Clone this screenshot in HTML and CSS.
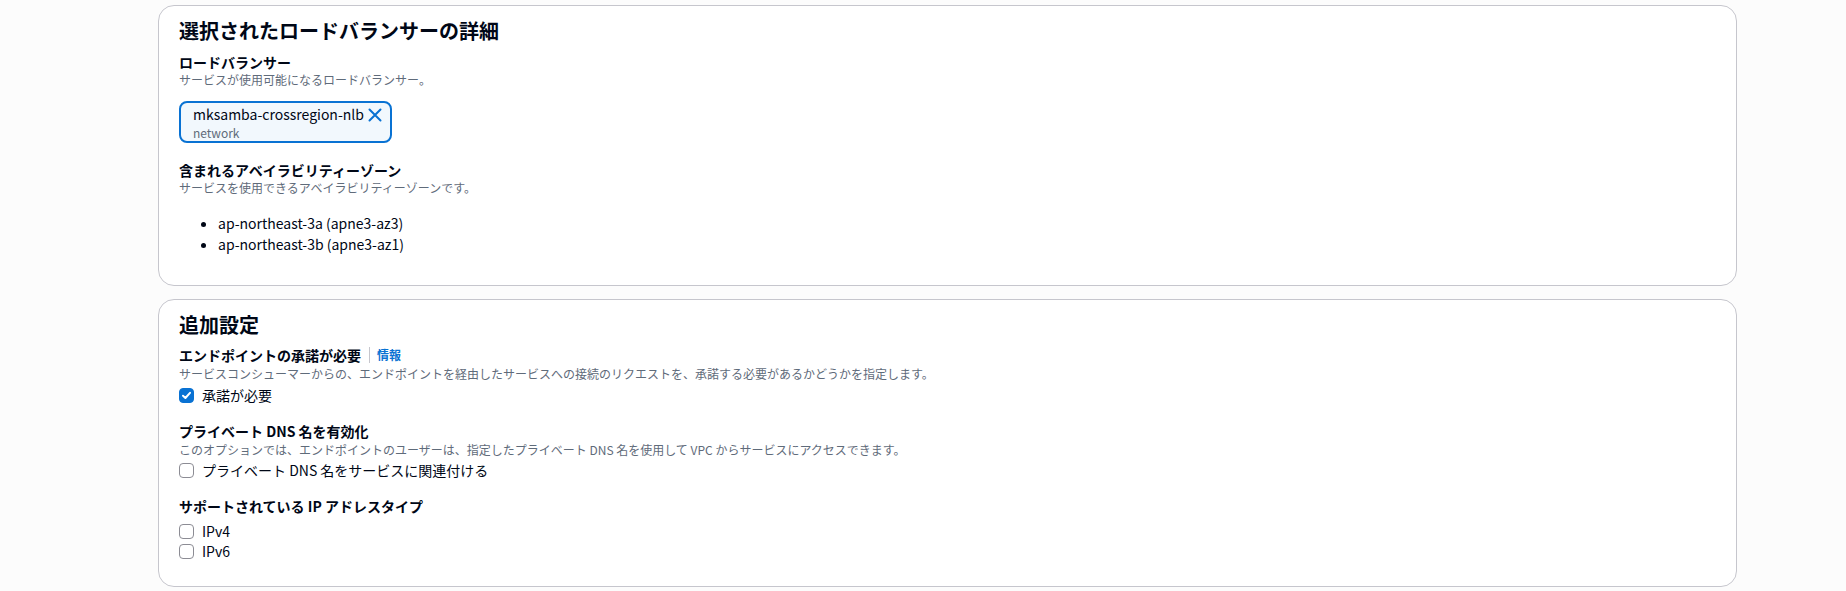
FILE: index.html
```html
<!DOCTYPE html>
<html lang="ja">
<head>
<meta charset="utf-8">
<link rel="stylesheet" href="styles.css">
</head>
<body>
<main class="page">
  <section class="card card-lb">
    <h2 class="card-title">選択されたロードバランサーの詳細</h2>
    <div class="field">
      <div class="label">ロードバランサー</div>
      <div class="desc">サービスが使用可能になるロードバランサー。</div>
    </div>
    <div class="token">
      <div class="token-text">
        <div class="token-name">mksamba-crossregion-nlb</div>
        <div class="token-sub">network</div>
      </div>
      <svg class="token-x" width="14" height="14" viewBox="0 0 14 14" aria-hidden="true">
        <path d="M1.5 1.5 L12.5 12.5 M12.5 1.5 L1.5 12.5" stroke="#0972d3" stroke-width="2" fill="none" stroke-linecap="round"/>
      </svg>
    </div>
    <div class="field field-az">
      <div class="label">含まれるアベイラビリティーゾーン</div>
      <div class="desc">サービスを使用できるアベイラビリティーゾーンです。</div>
    </div>
    <ul class="az-list">
      <li>ap-northeast-3a (apne3-az3)</li>
      <li>ap-northeast-3b (apne3-az1)</li>
    </ul>
  </section>

  <section class="card card-extra">
    <h2 class="card-title">追加設定</h2>
    <div class="field field-first">
      <div class="label label-tall">エンドポイントの承諾が必要<span class="sep"></span><a class="info">情報</a></div>
      <div class="desc">サービスコンシューマーからの、エンドポイントを経由したサービスへの接続のリクエストを、承諾する必要があるかどうかを指定します。</div>
    </div>
    <label class="check check-a">
      <span class="box box-on">
        <svg width="11" height="11" viewBox="0 0 11 11" aria-hidden="true"><path d="M2 5.8 L4.4 8 L9 2.8" stroke="#fff" stroke-width="2" fill="none" stroke-linecap="round" stroke-linejoin="round"/></svg>
      </span>
      <span class="check-text">承諾が必要</span>
    </label>

    <div class="field field-gap">
      <div class="label label-tall">プライベート DNS 名を有効化</div>
      <div class="desc">このオプションでは、エンドポイントのユーザーは、指定したプライベート DNS 名を使用して VPC からサービスにアクセスできます。</div>
    </div>
    <label class="check check-b">
      <span class="box"></span>
      <span class="check-text">プライベート DNS 名をサービスに関連付ける</span>
    </label>

    <div class="field field-gap">
      <div class="label label-tall">サポートされている IP アドレスタイプ</div>
    </div>
    <label class="check check-c">
      <span class="box"></span>
      <span class="check-text">IPv4</span>
    </label>
    <label class="check">
      <span class="box"></span>
      <span class="check-text">IPv6</span>
    </label>
  </section>
</main>
</body>
</html>
```

FILE: styles.css
```css
* { box-sizing: border-box; }
html, body {
  margin: 0;
  padding: 0;
  background: #fcfcfc;
}
body {
  font-family: "Noto Sans CJK JP", "Noto Sans", sans-serif;
  color: #000716;
}
.page {
  padding: 5px 0 0 158px;
  display: flex;
  flex-direction: column;
  gap: 13px;
}
.card {
  width: 1579px;
  background: #ffffff;
  border: 1px solid #c6c6cd;
  border-radius: 16px;
  padding: 13px 20px 0 20px;
  display: flex;
  flex-direction: column;
  align-items: flex-start;
}
.card-lb { padding-bottom: 30px; }
.card-extra { padding-bottom: 25px; }
.card-title {
  margin: 0;
  font-size: 20px;
  line-height: 24px;
  font-weight: 700;
}
.field {
  display: flex;
  flex-direction: column;
}
.card-title + .field { margin-top: 9px; }
.card-title + .field-first { margin-top: 7px; }
.label {
  font-size: 14px;
  line-height: 20px;
  font-weight: 700;
  display: flex;
  align-items: center;
}
.label-tall { line-height: 22px; }
.desc {
  font-size: 12px;
  line-height: 16px;
  color: #5f6b7a;
}
.sep {
  display: inline-block;
  width: 1px;
  height: 16px;
  background: #c6c6cd;
  margin: 0 7px 0 8px;
}
.info {
  font-size: 12px;
  font-weight: 700;
  color: #0972d3;
}
.token {
  margin-top: 13px;
  width: 213px;
  height: 42px;
  border: 2px solid #0972d3;
  border-radius: 8px;
  background: #f2f8fd;
  padding: 1px 8px 0 12px;
  display: flex;
  justify-content: space-between;
  align-items: flex-start;
}
.token-name {
  font-size: 14px;
  line-height: 20px;
}
.token-sub {
  font-size: 12px;
  line-height: 17px;
  color: #5f6b7a;
}
.token-x {
  margin-top: 4px;
}
.field-az { margin-top: 17px; }
.az-list {
  margin: 17px 0 0 0;
  padding-left: 39px;
  font-size: 14px;
  line-height: 21px;
}
.check {
  display: flex;
  align-items: center;
  gap: 8px;
  font-size: 14px;
  line-height: 20px;
}
.check-a { margin-top: 3px; }
.check-b { margin-top: 2px; }
.check-c { margin-top: 4px; }
.box {
  width: 15px;
  height: 15px;
  border: 1.5px solid #8c8c94;
  border-radius: 4px;
  background: #fff;
  display: flex;
  align-items: center;
  justify-content: center;
}
.box-on {
  background: #0972d3;
  border-color: #0972d3;
}
.field-gap { margin-top: 15px; }
```
